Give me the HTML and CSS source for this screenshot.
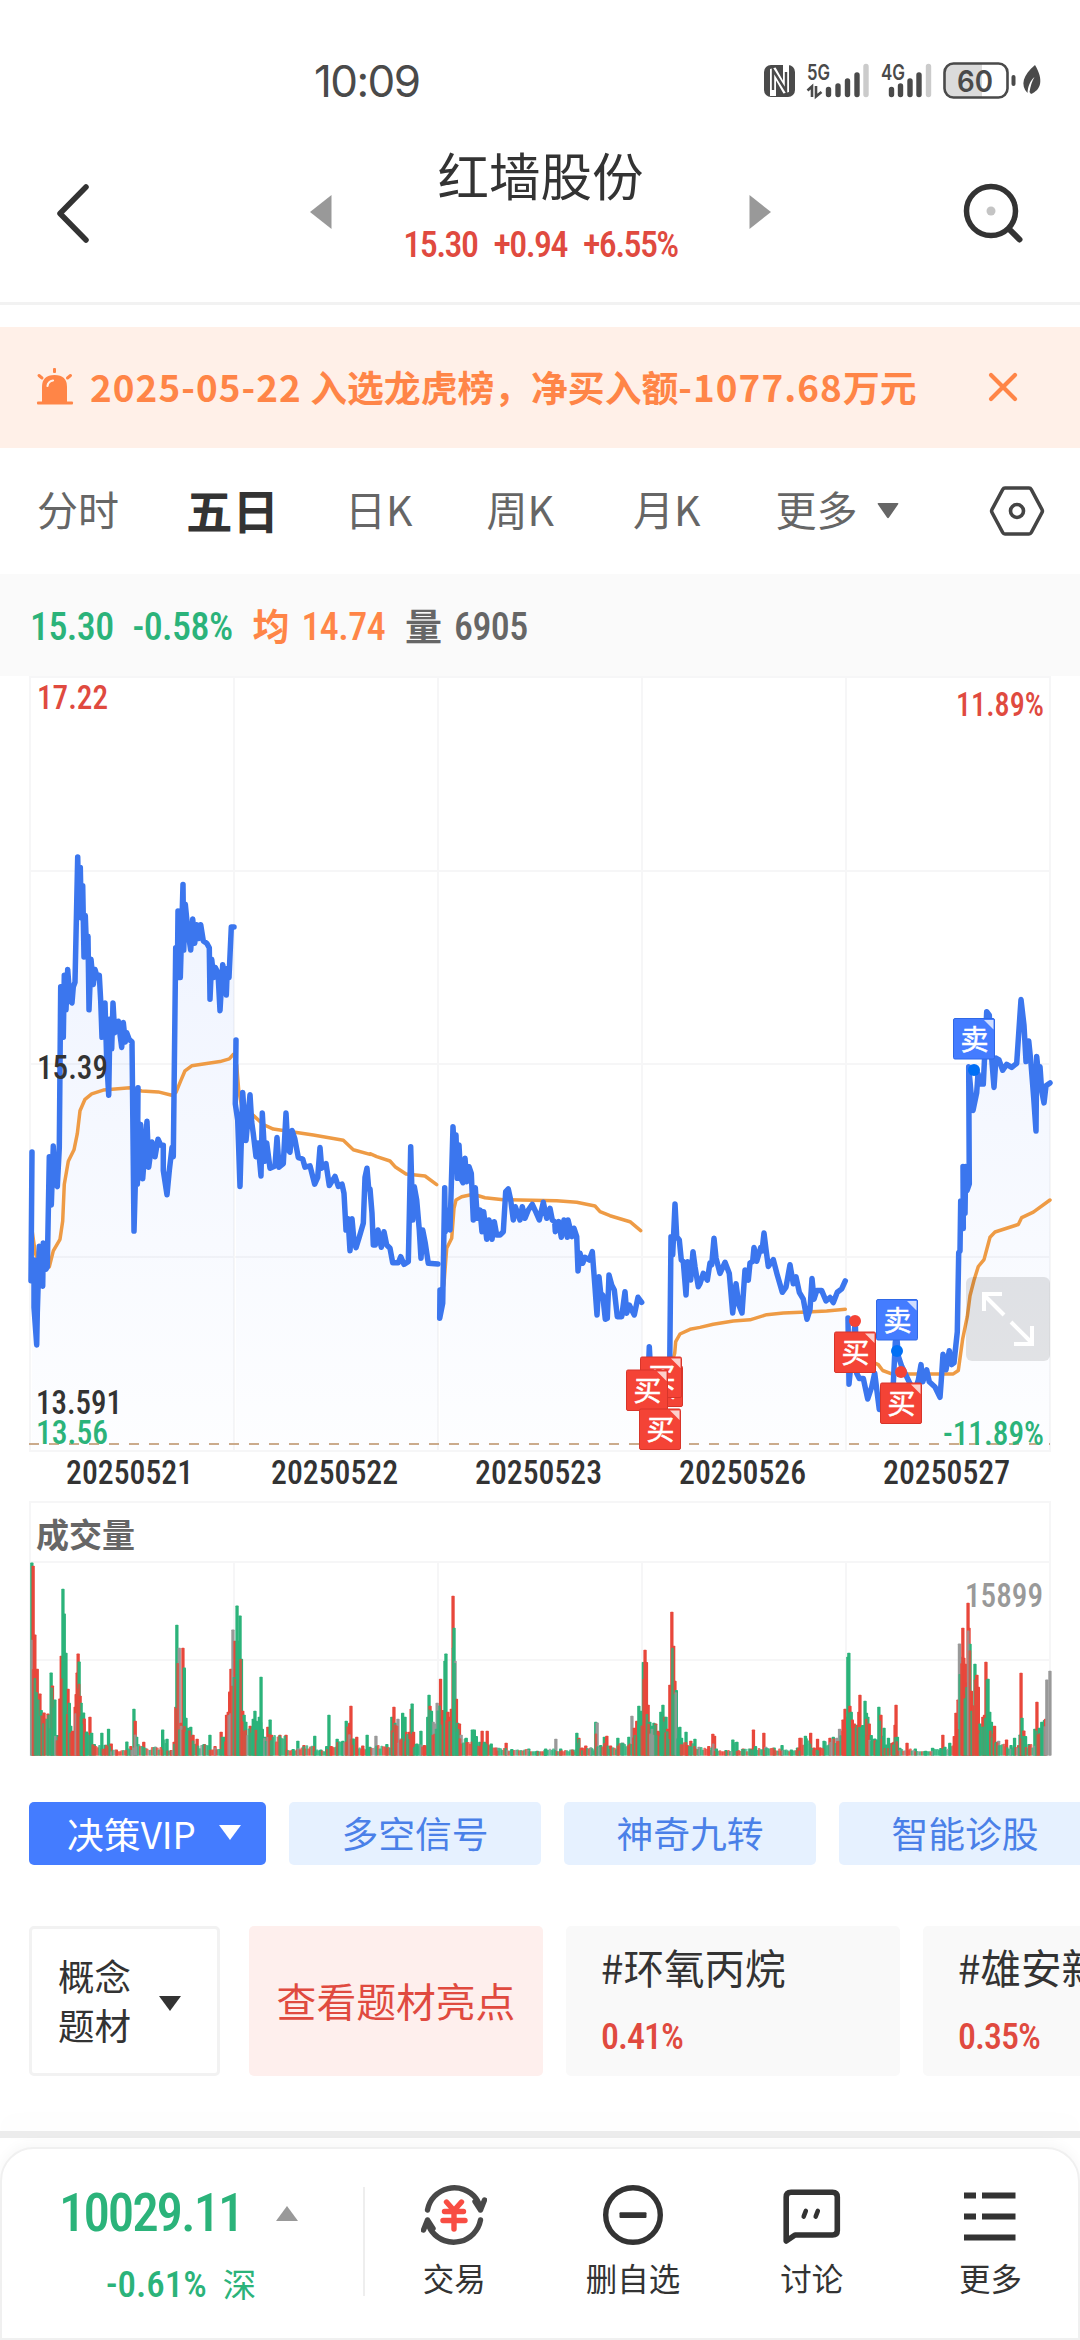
FILE: index.html
```html
<!DOCTYPE html>
<html lang="zh-CN">
<head>
<meta charset="utf-8">
<title>红墙股份</title>
<link rel="stylesheet" href="styles.css">
</head>
<body>
<div class="app">
  <div class="status">
    <span class="clock">10:09</span>
    <svg class="status-icons" width="310" height="60" viewBox="0 0 310 60">
      <rect x="14" y="15" width="31" height="32" rx="7" fill="#4a4a4a"/>
      <path d="M23 46V19L36 42V15" fill="none" stroke="#fff" stroke-width="6" stroke-linejoin="bevel"/>
      <path d="M23 40V20L36 41V22" fill="none" stroke="#4a4a4a" stroke-width="2.4"/>
      <text x="57" y="30" class="net" textLength="23" lengthAdjust="spacingAndGlyphs">5G</text>
      <text x="131" y="30" class="net" textLength="24" lengthAdjust="spacingAndGlyphs">4G</text>
      <path d="M57.500 40.500L62 36.500V47M66 36V46.500L71.500 42" fill="none" stroke="#4a4a4a" stroke-width="2.600"/>
      <g fill="none" stroke="#4a4a4a" stroke-width="5.400" stroke-linecap="round">
        <path d="M78.500 39.500V44.500M88 36V44.500M97.500 31V44.500M107 25V44.500"/>
        <path d="M141.500 39.500V44.500M150.500 36V44.500M160 31V44.500M169 25V44.500"/>
        <path d="M116 16.500V44.500M178.500 16.500V44.500" stroke="#cbcbcb"/>
      </g>
      <path d="M202 14H232V47H202Q195 47 195 40V21Q195 14 202 14Z" fill="#dbdbdb"/>
      <rect x="194.500" y="13.500" width="63" height="34" rx="9" fill="none" stroke="#4a4a4a" stroke-width="2.600"/>
      <text x="207" y="41.500" class="batt" textLength="36" lengthAdjust="spacingAndGlyphs">60</text>
      <path d="M263.500 27V34" stroke="#4a4a4a" stroke-width="4" stroke-linecap="round"/>
      <path d="M285 15C294 30 291 40 281 44L279.500 42C280.500 36 282 31 284.500 27C280 31 278 36 277.500 43C270 35 273 25 285 15Z" fill="#4a4a4a"/>
    </svg>
  </div>

  <header class="header">
    <svg class="back" width="40" height="64" viewBox="0 0 40 64"><path d="M32 6L6 32.500L32 59" fill="none" stroke="#333" stroke-width="5.500" stroke-linecap="round" stroke-linejoin="round"/></svg>
    <svg class="prev" width="22" height="34" viewBox="0 0 22 34"><path d="M21.500 0V34L0 17Z" fill="#999"/></svg>
    <div class="heading">
      <h1>红墙股份</h1>
      <div class="quote num"><span>15.30</span><span>+0.94</span><span>+6.55%</span></div>
    </div>
    <svg class="next" width="22" height="34" viewBox="0 0 22 34"><path d="M.5 0V34L22 17Z" fill="#999"/></svg>
    <svg class="search" width="62" height="62" viewBox="0 0 62 62"><circle cx="29" cy="29" r="24.500" fill="none" stroke="#333" stroke-width="5.500"/><circle cx="29" cy="29" r="4.500" fill="#c4c4c4"/><path d="M47 47L57.500 57.500" stroke="#333" stroke-width="6" stroke-linecap="round"/></svg>
  </header>

  <div class="notice">
    <svg width="38" height="40" viewBox="0 0 38 40"><g fill="#ff8547"><path d="M6 35V20Q6 8 18.500 8T31 20V35Z"/><rect x="1" y="34.500" width="36" height="3" rx="1"/><rect x="17" y="1" width="3" height="5" rx="1"/></g><path d="M3 8.500L6 11M34.500 8.500L31.500 11" stroke="#ff8547" stroke-width="3" stroke-linecap="round"/><path d="M11.500 19Q12 14.500 17 13.500" fill="none" stroke="#fff0e8" stroke-width="2.200" stroke-linecap="round"/></svg>
    <p><span class="date">2025-05-22</span> 入选龙虎榜，净买入额<span class="amount">-1077.68</span>万元</p>
    <svg class="close" width="30" height="30" viewBox="0 0 30 30"><path d="M3 3L27 27M27 3L3 27" stroke="#ff8547" stroke-width="4.200" stroke-linecap="round"/></svg>
  </div>

  <nav class="tabs">
    <span class="t1">分时</span>
    <span class="t2 active">五日</span>
    <span class="t3">日K</span>
    <span class="t4">周K</span>
    <span class="t5">月K</span>
    <span class="t6">更多</span>
    <svg class="more" width="22" height="16" viewBox="0 0 22 16"><path d="M1.500 0H20.500Q22 0 21 1.500L12 14.500Q11 16 10 14.500L1 1.500Q0 0 1.500 0Z" fill="#666"/></svg>
    <svg class="gear" width="56" height="52" viewBox="0 0 56 52"><path d="M16 3H40Q41.500 3 42.300 4.500L53 24.500Q53.800 26 53 27.500L42.300 47.500Q41.500 49 40 49H16Q14.500 49 13.700 47.500L3 27.500Q2.200 26 3 24.500L13.700 4.500Q14.500 3 16 3Z" fill="none" stroke="#444" stroke-width="3.600"/><circle cx="28" cy="26" r="6.500" fill="none" stroke="#444" stroke-width="3.600"/></svg>
  </nav>

  <div class="info">
    <span class="num green">15.30</span>
    <span class="num green chg">-0.58%</span>
    <span class="label orange">均</span>
    <span class="num orange avg">14.74</span>
    <span class="label gray">量</span>
    <span class="num gray vol">6905</span>
  </div>

  <svg class="chart" width="1080" height="1096" viewBox="0 676 1080 1096">
    <defs>
      <linearGradient id="fade" gradientUnits="userSpaceOnUse" x1="0" y1="850" x2="0" y2="1451">
        <stop offset="0" stop-color="#447cff" stop-opacity=".09"/>
        <stop offset="1" stop-color="#447cff" stop-opacity=".01"/>
      </linearGradient>
      <g id="tag">
        <rect x=".5" y=".5" width="41" height="40.500" rx="1.500"/>
        <path d="M31 2H40.500V11.500Z" fill="#fff" fill-opacity=".75" stroke="none"/>
      </g>
    </defs>
    <path d="M30 677H1050V1451H30ZM234 677V1451M438 677V1451M642 677V1451M846 677V1451M30 871H1050M30 1064H1050M30 1257H1050" class="grid"/>
    <path d="M30 1756V1502H1050V1756M30 1562H1050M30 1660H1050M234 1562V1756M438 1562V1756M642 1562V1756M846 1562V1756" class="grid"/>
    <g id="areas"></g>
    <path d="M29 1444H1050" stroke="#cbab8c" stroke-width="2" stroke-dasharray="10 10"/>
    <g id="averages"></g>
    <g id="prices"></g>
    <g id="volumes"></g>

    <rect x="966" y="1277" width="84" height="84" rx="6" fill="#000" fill-opacity=".1"/>
    <path d="M1004 1315L984 1295M984 1311V1294H1002M1011 1322L1032 1343M1014 1344H1032V1326" fill="none" stroke="#fff" stroke-width="4"/>

    <g class="axis">
      <text x="37" y="709" textLength="71" lengthAdjust="spacingAndGlyphs" class="c-red">17.22</text>
      <text x="956" y="716" textLength="88" lengthAdjust="spacingAndGlyphs" class="c-red">11.89%</text>
      <text x="37" y="1079" textLength="71" lengthAdjust="spacingAndGlyphs">15.39</text>
      <text x="36" y="1414" textLength="86" lengthAdjust="spacingAndGlyphs">13.591</text>
      <text x="36" y="1444" textLength="72" lengthAdjust="spacingAndGlyphs" class="c-green">13.56</text>
      <text x="943" y="1445" textLength="101" lengthAdjust="spacingAndGlyphs" class="c-green">-11.89%</text>
      <text x="66" y="1484" textLength="127" lengthAdjust="spacingAndGlyphs">20250521</text>
      <text x="271" y="1484" textLength="127" lengthAdjust="spacingAndGlyphs">20250522</text>
      <text x="475" y="1484" textLength="127" lengthAdjust="spacingAndGlyphs">20250523</text>
      <text x="679" y="1484" textLength="127" lengthAdjust="spacingAndGlyphs">20250526</text>
      <text x="883" y="1484" textLength="127" lengthAdjust="spacingAndGlyphs">20250527</text>
      <text x="965" y="1607" textLength="78" lengthAdjust="spacingAndGlyphs" class="c-gray">15899</text>
    </g>
    <text x="36" y="1547" class="pane-title">成交量</text>

    <g class="buy">
      <use href="#tag" x="641" y="1365.500"/><text x="662.500" y="1397">买</text>
      <use href="#tag" x="640" y="1356.500"/><text x="661.500" y="1388">买</text>
      <use href="#tag" x="626" y="1369.500"/><text x="647.500" y="1401">买</text>
      <use href="#tag" x="639" y="1408.500"/><text x="660.500" y="1440">买</text>
      <use href="#tag" x="834" y="1331.500"/><text x="855.500" y="1363">买</text>
      <use href="#tag" x="880" y="1382.500"/><text x="901.500" y="1414">买</text>
      <circle cx="855" cy="1321" r="6"/><circle cx="901" cy="1372" r="6"/>
    </g>
    <g class="sell">
      <use href="#tag" x="953" y="1018"/><text x="974.500" y="1049.500">卖</text>
      <use href="#tag" x="876" y="1299"/><text x="897.500" y="1330.500">卖</text>
      <circle cx="974" cy="1070" r="6"/><circle cx="897" cy="1351" r="6"/>
    </g>
  </svg>

  <div class="chips">
    <div class="chip vip">决策VIP<svg width="22" height="15" viewBox="0 0 22 15"><path d="M0 0H22L11 15Z" fill="#fff"/></svg></div>
    <div class="chip">多空信号</div>
    <div class="chip">神奇九转</div>
    <div class="chip">智能诊股</div>
  </div>

  <div class="cards">
    <div class="card concept"><span>概念<br>题材</span><svg width="22" height="15" viewBox="0 0 22 15"><path d="M0 0H22L11 15Z" fill="#333"/></svg></div>
    <div class="card highlight">查看题材亮点</div>
    <div class="card topic"><b>#环氧丙烷</b><span class="num">0.41%</span></div>
    <div class="card topic"><b>#雄安新区</b><span class="num">0.35%</span></div>
  </div>

  <div class="divider"></div>
  <footer class="bar">
    <div class="index">
      <div class="index-top"><span class="num">10029.11</span><svg width="22" height="15" viewBox="0 0 22 15"><path d="M0 15H22L11 0Z" fill="#999"/></svg></div>
      <div class="index-sub"><span class="num">-0.61%</span><span>深</span></div>
    </div>
    <div class="actions">
      <div class="action">
        <svg width="66" height="62" viewBox="0 0 66 62"><g fill="none" stroke="#484848" stroke-width="5.400" stroke-linecap="round" stroke-linejoin="round"><path d="M6.500 26A27.300 27.300 0 0 1 55 14.500Q58.500 19 59.500 26L63.500 16M59.500 26L54 17.500"/><path d="M59.500 36A27.300 27.300 0 0 1 11 47.500Q7.500 43 6.500 36L2.500 46M6.500 36L12 44.500"/></g><path d="M25.500 18L33 26.500L40.500 18M23.500 27.500H42.500M22 36.500H44M33 27V45" fill="none" stroke="#f84d43" stroke-width="5.400" stroke-linecap="round"/></svg>
        <span>交易</span>
      </div>
      <div class="action">
        <svg width="66" height="62" viewBox="0 0 66 62"><circle cx="33" cy="31" r="27.300" fill="none" stroke="#333" stroke-width="5.400"/><rect x="19.500" y="28.300" width="27" height="5.800" rx="1" fill="#333"/></svg>
        <span>删自选</span>
      </div>
      <div class="action">
        <svg width="66" height="62" viewBox="0 0 66 62"><path d="M7.200 57V13Q7.200 8.200 12 8.200H53.500Q58.300 8.200 58.300 13V46.500Q58.300 51 53.500 51H16Z" fill="none" stroke="#333" stroke-width="5.600" stroke-linejoin="round"/><path d="M26.800 27L24.700 32.500M38.800 27L36.700 32.500" stroke="#333" stroke-width="4.600" stroke-linecap="round"/></svg>
        <span>讨论</span>
      </div>
      <div class="action">
        <svg width="66" height="62" viewBox="0 0 66 62"><path d="M7 11.500H19M25 11.500H58.500M7 32.500H19M25 32.500H58.500M7 53.500H58.500" stroke="#333" stroke-width="6.200"/></svg>
        <span>更多</span>
      </div>
    </div>
  </footer>
</div>
<script src="chart.js"></script>
</body>
</html>
```
FILE: styles.css
```css
* { box-sizing: border-box; }
body {
  margin: 0;
  background: #fff;
  font-family: "Noto Sans CJK SC", "Noto Sans", sans-serif;
  color: #333;
}
svg { display: block; flex: none; }
.app {
  width: 1080px;
  height: 2340px;
  overflow: hidden;
  display: flex;
  flex-direction: column;
}
.app > * { flex: none; }
.num {
  font-family: Roboto, "Liberation Sans", sans-serif;
  font-stretch: 75%;
  font-weight: 470;
  white-space: nowrap;
}
.green { color: #2bb37a; }
.orange { color: #ff8547; }
.gray { color: #666; }

.status {
  height: 110px;
  padding: 50px 20px 0 314px;
  display: flex;
  justify-content: space-between;
}
.clock { font: 400 44px/62px Inter, sans-serif; letter-spacing: -1.6px; color: #4a4a4a; }
.net { font: 600 21px Inter, sans-serif; fill: #4a4a4a; }
.batt { font: 600 30px Inter, sans-serif; fill: #4a4a4a; }

.header {
  height: 195px;
  border-bottom: 3px solid #f2f2f2;
  display: flex;
  align-items: flex-start;
}
.back { margin: 71px 0 0 54px; }
.prev { margin: 85px 0 0 216px; }
.heading { width: 417px; padding-top: 34px; text-align: center; }
.heading h1 { margin: 0; font-size: 51.500px; line-height: 60px; font-weight: 400; }
.quote {
  margin-top: 20px;
  font-size: 36px;
  line-height: 42px;
  letter-spacing: -1.6px;
  color: #e04a3f;
  display: flex;
  justify-content: center;
  gap: 16px;
}
.next { margin-top: 85px; }
.search { margin: 72px 0 0 191px; }

.notice {
  height: 121px;
  margin-top: 22px;
  padding: 0 62px 2px 36px;
  background: #fff0e8;
  color: #ff8547;
  display: flex;
  align-items: center;
}
.notice p { margin: -2px auto 0 16px; font-size: 36.800px; font-weight: 700; line-height: 54px; white-space: nowrap; }
.date { letter-spacing: 1.1px; }
.amount { letter-spacing: 1.1px; }

.tabs {
  height: 126px;
  padding-left: 37px;
  display: flex;
  align-items: center;
  font-size: 41px;
  color: #666;
}
.tabs span { margin-top: -6px; }
.tabs .active { font-size: 46.500px; font-weight: 700; color: #333; }
.tabs .t2 { margin-left: 67px; }
.tabs .t3 { margin-left: 66px; }
.tabs .t4 { margin-left: 74px; }
.tabs .t5 { margin-left: 79px; }
.tabs .t6 { margin-left: 75px; }
.more { margin-left: 19px; }
.gear { margin-left: 90px; }

.info {
  height: 102px;
  padding: 4px 0 0 30px;
  background: #fafafa;
  display: flex;
  align-items: center;
  font-size: 38px;
}
.info .num { letter-spacing: -.6px; }
.label { font-size: 37px; font-weight: 700; margin-top: -4px; }
.chg { margin-left: 19px; }
.info .label { margin-left: 20px; }
.avg, .vol { margin-left: 12px; }

.grid { fill: none; stroke: #f6f6f7; stroke-width: 2; }
.axis text { font: 470 33.500px Roboto, sans-serif; font-stretch: 75%; fill: #333; }
.axis .c-red { fill: #e04a3f; }
.axis .c-green { fill: #2bb37a; }
.axis .c-gray { fill: #999; }
.pane-title { font-size: 33px; font-weight: 700; fill: #666; }
.buy { fill: #f44336; stroke: #d8352a; }
.sell { fill: #447cff; stroke: #2f68e6; }
.buy text, .sell text { fill: #fff; stroke: #fff; stroke-width: .5; font-size: 28px; text-anchor: middle; }
.buy circle { stroke: none; }
.sell circle { fill: #0070f5; stroke: none; }

.chips {
  height: 93px;
  margin-top: 30px;
  padding-left: 29px;
  display: flex;
  align-items: flex-start;
  gap: 23px;
}
.chip {
  flex: none;
  width: 252px;
  height: 63px;
  border-radius: 5px;
  background: #e6f1ff;
  color: #4a80e8;
  font-size: 36.800px;
  line-height: 60px;
  text-align: center;
}
.vip {
  width: 237px;
  padding: 0 0 2px 13px;
  background: #447cff;
  color: #fff;
  display: flex;
  align-items: center;
  justify-content: center;
  gap: 23px;
}
.cards {
  margin-top: 31px;
  height: 150px;
  padding-left: 29px;
  display: flex;
  gap: 23px;
}
.card { flex: none; height: 150px; border-radius: 5px; }
.concept {
  width: 191px;
  margin-right: 6px;
  border: 3px solid #f2f2f2;
  font-size: 36.500px;
  line-height: 49px;
  padding-left: 26px;
  display: flex;
  align-items: center;
  gap: 28px;
}
.concept span { margin-top: -3px; }
.concept svg { margin-top: 4px; }
.highlight {
  width: 294px;
  background: #feefed;
  color: #e04a3f;
  font-size: 39.800px;
  line-height: 147px;
  text-align: center;
}
.topic { width: 334px; padding: 12px 35px 0; background: #f9f9f9; white-space: nowrap; }
.topic b { display: block; font-size: 40.500px; font-weight: 400; line-height: 58px; }
.topic .num { display: block; margin-top: 19px; font-size: 36px; line-height: 44px; letter-spacing: -1px; color: #e04a3f; }

.divider { height: 7px; margin-top: 55px; background: #ececec; box-shadow: 0 -8px 24px rgba(0,0,0,.03); }
.bar {
  height: 193px;
  margin-top: 9px;
  border: 2px solid #f0f0f0;
  border-radius: 34px 34px 0 0;
  display: flex;
  box-shadow: 0 -4px 12px rgba(0,0,0,.03);
  background: #fff;
}
.index { flex: none; width: 363px; height: 109px; margin-top: 38px; border-right: 2px solid #eee; color: #2bb37a; }
.index-top { display: flex; align-items: center; padding-left: 57px; height: 52px; gap: 34px; font-size: 53px; }
.index-top .num { letter-spacing: -2.100px; font-weight: 500; }
.index-sub { display: flex; align-items: center; padding-left: 104px; margin-top: 20px; height: 50px; gap: 16px; font-size: 33.500px; }
.index-sub .num { font-size: 37px; }
.index-sub span:last-child { margin-top: -4px; }
.actions { flex: none; display: flex; padding-top: 35px; }
.action { width: 178.700px; display: flex; flex-direction: column; align-items: center; font-size: 31.500px; line-height: 46px; }
.action span { margin-top: 8px; }
```
FILE: chart.js
```js
const NS = "http://www.w3.org/2000/svg";

// Each block: [originX, originY, unitX, unitY, "x,y x,y ..."]
const L = [20, 670, 3, 2.178], M = [370, 1000, 3, 3], R = [700, 960, 3, 2.904];

const prices = [
  [[L, "36,1050 33,1330 42,1285 42,1388 50,1470 52,1400 58,1255 62,1310 68,1342 70,1248 78,1305 82,1300 88,1060 94,1165 100,1037 104,1115 112,1125 118,1040 122,690 130,800 133,665 138,740 143,652 150,720 156,725 160,690 165,680 173,407 176,505 181,430 184,540 188,470 192,625 196,535 200,620 204,580 207,740 213,630 220,685 225,652 232,670 238,665 242,720 246,800 255,725 260,850 266,926 270,760 275,825 279,725 284,790 295,765 305,822 310,768 316,810 320,790 328,805 336,810 342,1222 354,910 352,1120 362,990 368,1108 381,983 386,1083 396,1028 405,1060 414,1022 422,1035 430,1035 430,1090 441,1143 448,1090 456,1040 460,1060 467,605 472,670 474,525 481,670 489,467 491,610 496,510 504,570 512,610 518,542 524,595 530,555 536,585 542,555 550,590 560,595 568,605 570,717 575,630 581,670 586,648 594,660 600,742 608,642 614,665 619,708 622,650 627,670 634,560 642,560"]],
  [[L, "648,806 646,945 653,980 660,1125 668,920 678,1025 690,925 695,985 700,1010 708,1060 714,1030 723,1102 727,965 735,1070 740,1030 750,1085 765,1080 771,1018 777,1083 790,1075 798,965 804,1045 810,1050 816,1003 824,1020 835,1062 848,1065 855,1083 870,1080 884,1120 893,1105 900,1040 905,1085 918,1075 928,1123 945,1103 955,1125 966,1120 972,1140 978,1220 984,1195 990,1265 996,1195 1002,1245 1008,1258 1018,1235 1030,1205 1035,1105 1041,1085 1046,1130"],
   [M, "0,567 6,640 10,735 16,735 24,690 34,742 42,695 50,735 60,745 68,788 85,788 92,770 102,793 115,785 118,650 122,440 128,660 133,560 140,600 148,690 153,775 158,690 166,730 175,790 204,792"]],
  [[M, "210,870 209,955 218,910 224,563 226,695 232,630 240,690 249,380 252,440 258,405 262,535 267,435 272,535 279,548 285,475 290,545 297,500 304,520 310,660 316,563 322,655 330,630 336,695 341,635 350,718 357,660 366,718 373,665 380,705 390,705 400,695 407,575 415,567 422,600 430,660 436,620 450,660 457,620 465,655 475,630 487,613 497,635 508,660 520,607 530,655 540,625 547,660 554,665 556,695 566,665 574,712 582,660 592,712 594,660 606,710 612,685 620,710 624,813 630,760 638,790 645,772 658,780 667,755 674,850 681,945 687,830 692,880 698,885 706,958 712,955 717,825 725,855 733,870 742,950 755,950 765,875 770,940 778,915 785,930 793,945 804,892 815,907"]],
  [[M, "836,1090 838,1040 842,1120 850,1220 862,1160 874,1300 884,1180 899,1100 903,710 908,765 915,612 920,710 928,720 934,780 940,785 948,885 953,785 962,840 969,755 975,800 985,860"],
   [R, "0,940 10,910 22,930 30,880 35,885 42,808 48,865 60,910 75,878 88,910 98,1025 108,940 116,1000 126,1025 135,900 145,930 150,880 158,875 162,835 170,875 182,835 186,845 192,793 198,840 205,890 220,870 232,915 247,965 258,950 270,885 280,940 288,920 298,965 310,985 321,1043 330,1015 336,925 342,985 350,960 365,960 378,990 390,980 400,995 412,965 425,955 436,932"]],
  [[R, "444,1040 447,1232 452,1180 466,1050 470,1200 478,1215 490,1215 503,1275 515,1240 524,1200 538,1305 545,1290 560,1250 580,1230 586,1110 590,1090 595,1150 605,1180 620,1210 630,1230 645,1250 655,1220 663,1175 668,1225 680,1190 688,1225 705,1240 720,1270 724,1220 729,1145 738,1190 748,1135 755,1175 762,1170 772,1080 776,850 780,845 782,700 790,780 789,600 795,735 797,600 801,670 808,650 806,310 814,395 819,437 830,385 834,330 840,360 850,360 853,300 860,150 868,160 872,250 882,370 888,285 897,290 908,320 920,303 935,312 950,300 963,115 972,190 978,295 986,235 993,300 1001,400 1008,497 1010,280 1016,340 1020,310 1025,380 1032,415 1038,365 1050,357"]]
];

const averages = [
  [[L, "36,1220 46,1270 60,1300 88,1300 100,1265 120,1240 128,1200 133,1120 145,1070 162,1045 172,1010 180,960 195,935 215,923 250,915 330,910 365,917 415,919 455,926 468,920 482,895 495,873 515,862 560,857 600,853 628,847 640,837"]],
  [[L, "650,860 656,915 665,950 700,970 730,990 760,1000 820,1006 880,1013 970,1024 1000,1045 1050,1055"],
   [M, "0,461 20,470 60,483 75,500 108,522 165,528 200,554"]],
  [[M, "212,900 222,850 230,745 245,715 252,625 258,600 275,590 310,583 345,593 400,599 560,602 620,607 675,618 690,635 720,647 780,665 812,692"]],
  [[M, "845,1120 905,1090 914,1060 917,1025 930,1002 960,988"],
   [R, "0,1067 40,1058 100,1048 150,1045 200,1030 250,1025 320,1022 380,1019 436,1014"]],
  [[R, "446,1140 500,1160 535,1175 548,1192 575,1202 760,1202 775,1192 788,1100 802,1035 810,975 822,930 835,890 852,870 870,805 885,790 955,768 965,748 1000,732 1050,697"]]
];

function add(parent, tag, attrs) {
  const el = document.createElementNS(NS, tag);
  for (const k in attrs) el.setAttribute(k, attrs[k]);
  document.getElementById(parent).appendChild(el);
}
function points(day) {
  return day.flatMap(([[ox, oy, ux, uy], s]) => s.split(" ").map(p => {
    const [x, y] = p.split(",").map(Number);
    return [+(ox + x / ux).toFixed(1), +(oy + y / uy).toFixed(1)];
  }));
}
const stroke = { fill: "none", "stroke-linejoin": "round", "stroke-linecap": "round" };
prices.map(points).forEach(p => {
  const d = "M" + p.map(q => q.join(" ")).join("L");
  add("areas", "path", { d: d + `L${p[p.length - 1][0]} 1450L${p[0][0]} 1450Z`, fill: "url(#fade)" });
  add("prices", "path", { d, ...stroke, stroke: "#3b76ee", "stroke-width": 5.5 });
});
averages.map(points).forEach(p => {
  add("averages", "path", { d: "M" + p.map(q => q.join(" ")).join("L"), ...stroke, stroke: "#ee9b45", "stroke-width": 3.5 });
});

// Volume peaks: x,top,colour (r up, g down, x flat)
const left = "35,217,g 39,227,r 44,433,r 51,536,r 59,610,r 63,660,g 71,667,r 83,670,r 92,547,g 96,586,r 103,628,g 111,735,g 118,625,r 122,497,r 127,296,g 131,370,g 136,488,g 142,596,r 146,638,g 150,707,g 156,722,r 163,650,r 166,612,r 169,547,r 172,490,r 175,514,g 178,617,r 181,638,g 188,667,g 190,685,r 197,724,g 207,680,r 212,728,g 220,762,g 242,728,g 252,764,g 262,716,g 270,760,r 285,778,r 316,754,g 328,768,r 337,656,g 341,692,r 345,740,g 366,755,r 400,770,g 422,718,g 435,746,g 447,780,r 456,755,r 461,650,r 464,404,g 471,473,x 476,698,r 482,473,r 486,532,g 491,683,g 497,713,g 505,710,g 512,734,r 524,746,r 545,762,g 562,734,g 577,768,r 595,725,r 604,740,g 611,674,r 616,665,r 620,604,r 624,536,r 630,418,x 636,452,r 642,346,g 646,452,g 651,376,g 655,506,g 659,662,r 663,674,g 668,695,g 681,707,r 690,686,g 695,662,g 699,692,g 704,738,g 708,680,g 713,560,g 717,716,g 725,740,g 733,710,r 740,688,g 744,734,r 769,734,r 787,734,r 808,777,g 822,752,g 840,765,r 872,737,g 890,778,g 907,768,g 914,674,g 920,768,r 938,746,g 955,752,g 965,692,g 975,698,r 979,647,r 985,745,g 996,740,r 1014,766,r 1027,734,g 1035,770,g 1053,737,x 1085,762,g 1100,680,g 1106,650,r 1110,698,g 1118,686,x 1125,745,x 1132,668,g 1139,680,g 1142,725,r 1152,725,r 1157,656,r 1160,640,g 1164,725,r 1174,760,g 1186,722,g 1196,765,r 1206,680,g 1210,614,g 1213,647,r 1217,662,g 1222,695,x 1228,700,x 1234,638,x 1244,566,r 1250,660,r 1257,512,g 1260,490,g 1266,665,r 1271,680,r 1276,656,r 1281,317,r 1284,413,g 1287,512,x 1291,626,r 1295,698,g 1300,700,r 1305,734,x 1320,743,g 1338,718,g 1344,718,g 1350,738,g 1360,755,g 1367,722,r 1374,755,g 1382,722,r 1394,760,g 1410,772,x 1438,758,r 1455,777,g 1505,775,g 1530,782,g 1555,775,g";
const right = "15,778,g 46,746,x 60,775,g 95,778,g 107,728,g 113,743,r 122,772,r 133,766,r 148,772,g 162,695,g 166,697,x 176,765,g 187,740,g 194,737,r 205,766,r 226,743,g 240,757,x 258,740,g 267,677,x 274,713,r 281,692,r 287,647,g 293,662,g 300,516,g 305,479,r 309,516,r 314,644,r 319,695,g 325,707,g 331,698,g 336,700,r 344,722,r 351,665,g 357,644,g 361,680,r 366,680,g 370,716,r 377,584,r 383,365,r 388,467,r 392,572,r 396,600,g 400,713,g 406,710,g 411,743,g 424,725,g 428,765,r 438,752,r 450,746,g 462,770,x 490,768,r 502,731,r 507,737,r 512,775,g 540,780,g 560,748,g 572,755,g 590,775,r 612,775,r 620,718,r 626,768,g 650,728,r 656,770,x 680,772,g 703,765,g 730,778,g 748,772,g 755,743,r 771,737,g 786,728,r 796,772,r 806,746,r 812,772,r 825,752,g 842,743,r 852,740,g 862,743,x 870,716,x 880,688,r 886,656,r 890,680,r 894,500,g 897,488,g 900,647,r 904,665,g 907,688,r 913,700,r 921,704,g 926,665,r 929,614,r 937,705,g 944,632,g 948,668,g 952,680,g 956,700,r 962,735,g 972,745,g 978,748,g 984,650,g 990,674,r 995,737,r 999,713,g 1005,763,g 1012,743,g 1022,758,r 1028,755,r 1031,704,r 1034,644,r 1038,740,g 1045,773,g 1066,758,r 1090,775,g 1120,782,g 1140,773,g 1164,774,g 1170,734,r 1176,770,g 1190,758,g 1203,738,r 1208,668,r 1214,628,r 1218,460,x 1222,500,x 1228,413,r 1231,503,r 1235,521,r 1239,577,r 1243,338,r 1246,413,r 1249,461,g 1253,602,r 1257,646,r 1263,521,g 1269,554,r 1273,590,r 1278,700,g 1286,680,r 1291,674,r 1295,515,r 1301,566,g 1306,665,g 1311,695,g 1320,707,r 1325,755,g 1332,752,x 1355,748,r 1368,765,g 1378,743,g 1390,765,r 1394,733,g 1397,548,r 1400,683,g 1405,721,r 1410,738,g 1420,762,g 1437,716,g 1443,635,r 1450,713,g 1457,695,g 1465,690,g 1468,686,r 1472,568,x 1481,542,x";
const colours = { r: "#e8473b", g: "#2bb37a", x: "#999999" };
const bars = [[left, 20, 2.958], [right, 540, 2.904]].flatMap(([s, ox, ux]) => s.split(" ").map(p => {
  const [x, y, c] = p.split(",");
  return { x: ox + x / ux, h: (797 - y) / 3, c };
})).sort((a, b) => a.x - b.x);

let seed = 7;
const rand = () => (seed = (seed * 16807) % 2147483647) / 2147483647;
const fill = [];
for (let x = 31.5; x < 1046; x += 1.7) {
  const i = bars.findIndex(b => b.x > x);
  const next = i < 0 ? bars[bars.length - 1] : bars[i], prev = i > 0 ? bars[i - 1] : next;
  const near = Math.min(prev.h, next.h);
  const h = Math.max(4.5, near * (0.6 + 0.4 * rand()));
  const k = rand();
  fill.push({ x, h, c: k < 0.42 ? "r" : k < 0.9 ? "g" : "x" });
}
const bar = (b, w, o) => add("volumes", "rect", {
  x: (b.x - w / 2).toFixed(1), y: (1755.7 - b.h).toFixed(1), width: w, height: b.h.toFixed(1), rx: 0.8, fill: colours[b.c], "fill-opacity": o
});
bars.forEach(b => bar(b, 3.3, 1));
fill.forEach(b => bar(b, 2.6, 0.8));
```
